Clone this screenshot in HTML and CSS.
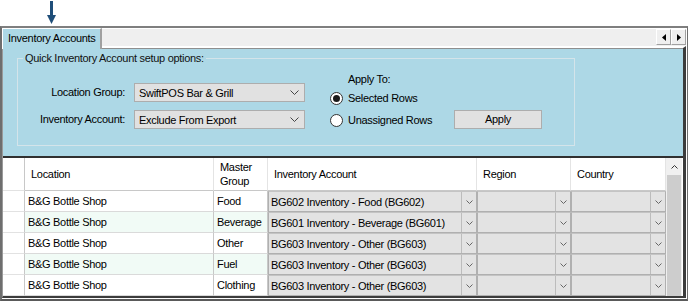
FILE: index.html
```html
<!DOCTYPE html>
<html>
<head>
<meta charset="utf-8">
<link rel="stylesheet" href="styles.css">
</head>
<body>
<div class="pointer">
  <svg width="11" height="26" viewBox="0 0 11 26"><rect x="4" y="1" width="3" height="16" fill="#1f4e79"/><polygon points="1,15 10,15 5.5,24" fill="#1f4e79"/></svg>
</div>
<div class="window">
  <div class="tabstrip">
    <div class="tab">Inventory Accounts</div>
    <div class="scrollbtns">
      <span class="sbtn"><svg width="4" height="7" viewBox="0 0 4 7"><polygon points="4,0 4,7 0,3.5" fill="#000"/></svg></span>
      <span class="sbtn"><svg width="4" height="7" viewBox="0 0 4 7"><polygon points="0,0 0,7 4,3.5" fill="#000"/></svg></span>
    </div>
  </div>
  <div class="page">
    <div class="group">
      <span class="legend">Quick Inventory Account setup options:</span>
      <div class="fields">
        <label class="flabel">Location Group:</label>
        <div class="combo"><span>SwiftPOS Bar &amp; Grill</span><svg class="chev" width="9" height="5" viewBox="0 0 9 5"><polyline points="0.5,0.5 4.5,4.5 8.5,0.5" fill="none" stroke="#444" stroke-width="1"/></svg></div>
        <label class="flabel">Inventory Account:</label>
        <div class="combo"><span>Exclude From Export</span><svg class="chev" width="9" height="5" viewBox="0 0 9 5"><polyline points="0.5,0.5 4.5,4.5 8.5,0.5" fill="none" stroke="#444" stroke-width="1"/></svg></div>
      </div>
      <div class="applyto">
        <div class="apply-title">Apply To:</div>
        <div class="radio-row"><span class="radio checked"></span>Selected Rows</div>
        <div class="radio-row"><span class="radio"></span>Unassigned Rows</div>
      </div>
      <div class="apply-btn">Apply</div>
    </div>
    <div class="gridwrap">
      <div class="grid">
        <div class="hdr rh"></div>
        <div class="hdr">Location</div>
        <div class="hdr">Master<br>Group</div>
        <div class="hdr">Inventory Account</div>
        <div class="hdr">Region</div>
        <div class="hdr">Country</div>

        <div class="rh"></div>
        <div class="cell">B&amp;G Bottle Shop</div>
        <div class="cell">Food</div>
        <div class="dd"><span>BG602 Inventory - Food (BG602)</span><i class="ddbtn"><svg width="7" height="4" viewBox="0 0 7 4"><polyline points="0.5,0.5 3.5,3.5 6.5,0.5" fill="none" stroke="#666"/></svg></i></div>
        <div class="dd"><span></span><i class="ddbtn"><svg width="7" height="4" viewBox="0 0 7 4"><polyline points="0.5,0.5 3.5,3.5 6.5,0.5" fill="none" stroke="#666"/></svg></i></div>
        <div class="dd"><span></span><i class="ddbtn"><svg width="7" height="4" viewBox="0 0 7 4"><polyline points="0.5,0.5 3.5,3.5 6.5,0.5" fill="none" stroke="#666"/></svg></i></div>

        <div class="rh alt"></div>
        <div class="cell alt">B&amp;G Bottle Shop</div>
        <div class="cell alt">Beverage</div>
        <div class="dd"><span>BG601 Inventory - Beverage (BG601)</span><i class="ddbtn"><svg width="7" height="4" viewBox="0 0 7 4"><polyline points="0.5,0.5 3.5,3.5 6.5,0.5" fill="none" stroke="#666"/></svg></i></div>
        <div class="dd"><span></span><i class="ddbtn"><svg width="7" height="4" viewBox="0 0 7 4"><polyline points="0.5,0.5 3.5,3.5 6.5,0.5" fill="none" stroke="#666"/></svg></i></div>
        <div class="dd"><span></span><i class="ddbtn"><svg width="7" height="4" viewBox="0 0 7 4"><polyline points="0.5,0.5 3.5,3.5 6.5,0.5" fill="none" stroke="#666"/></svg></i></div>

        <div class="rh"></div>
        <div class="cell">B&amp;G Bottle Shop</div>
        <div class="cell">Other</div>
        <div class="dd"><span>BG603 Inventory - Other (BG603)</span><i class="ddbtn"><svg width="7" height="4" viewBox="0 0 7 4"><polyline points="0.5,0.5 3.5,3.5 6.5,0.5" fill="none" stroke="#666"/></svg></i></div>
        <div class="dd"><span></span><i class="ddbtn"><svg width="7" height="4" viewBox="0 0 7 4"><polyline points="0.5,0.5 3.5,3.5 6.5,0.5" fill="none" stroke="#666"/></svg></i></div>
        <div class="dd"><span></span><i class="ddbtn"><svg width="7" height="4" viewBox="0 0 7 4"><polyline points="0.5,0.5 3.5,3.5 6.5,0.5" fill="none" stroke="#666"/></svg></i></div>

        <div class="rh alt"></div>
        <div class="cell alt">B&amp;G Bottle Shop</div>
        <div class="cell alt">Fuel</div>
        <div class="dd"><span>BG603 Inventory - Other (BG603)</span><i class="ddbtn"><svg width="7" height="4" viewBox="0 0 7 4"><polyline points="0.5,0.5 3.5,3.5 6.5,0.5" fill="none" stroke="#666"/></svg></i></div>
        <div class="dd"><span></span><i class="ddbtn"><svg width="7" height="4" viewBox="0 0 7 4"><polyline points="0.5,0.5 3.5,3.5 6.5,0.5" fill="none" stroke="#666"/></svg></i></div>
        <div class="dd"><span></span><i class="ddbtn"><svg width="7" height="4" viewBox="0 0 7 4"><polyline points="0.5,0.5 3.5,3.5 6.5,0.5" fill="none" stroke="#666"/></svg></i></div>

        <div class="rh"></div>
        <div class="cell">B&amp;G Bottle Shop</div>
        <div class="cell">Clothing</div>
        <div class="dd"><span>BG603 Inventory - Other (BG603)</span><i class="ddbtn"><svg width="7" height="4" viewBox="0 0 7 4"><polyline points="0.5,0.5 3.5,3.5 6.5,0.5" fill="none" stroke="#666"/></svg></i></div>
        <div class="dd"><span></span><i class="ddbtn"><svg width="7" height="4" viewBox="0 0 7 4"><polyline points="0.5,0.5 3.5,3.5 6.5,0.5" fill="none" stroke="#666"/></svg></i></div>
        <div class="dd"><span></span><i class="ddbtn"><svg width="7" height="4" viewBox="0 0 7 4"><polyline points="0.5,0.5 3.5,3.5 6.5,0.5" fill="none" stroke="#666"/></svg></i></div>
      </div>
      <div class="vscroll">
        <div class="vs-up"><svg width="7" height="4" viewBox="0 0 7 4"><polyline points="0.5,3.5 3.5,0.5 6.5,3.5" fill="none" stroke="#333"/></svg></div>
        <div class="vs-thumb"></div>
      </div>
    </div>
  </div>
</div>
</body>
</html>
```

FILE: styles.css
```css
* { box-sizing: border-box; }
html, body { margin: 0; padding: 0; }
body {
  width: 688px;
  height: 301px;
  overflow: hidden;
  background: #fff;
  font-family: "Liberation Sans", Arial, sans-serif;
  font-size: 11px;
  letter-spacing: -0.3px;
  color: #000;
}
.pointer {
  height: 26px;
  padding-left: 46px;
}
.pointer svg { display: block; }

.window {
  height: 275px;
  border-top: 2px solid #7f7f7f;
  border-left: 2px solid #6e6e6e;
  border-right: 1px solid #6e6e6e;
  border-bottom: 2px solid #5a5a5a;
  padding-right: 1px;
  padding-bottom: 1px;
  background: #fff;
  display: flex;
  flex-direction: column;
}
.tabstrip {
  height: 18px;
  flex: none;
  background: #efefef;
  border-top: 1px solid #fff;
  display: flex;
  justify-content: space-between;
  align-items: flex-start;
}
.tab {
  position: relative;
  z-index: 1;
  width: 100px;
  height: 21px;
  margin-top: -1px;
  background: #add8e6;
  border-left: 1px solid #fff;
  border-top: 1px solid #fff;
  border-right: 2px solid #a0a0a0;
  padding: 3px 0 0 5px;
  line-height: 13px;
}
.scrollbtns { display: flex; margin-top: 0; }
.sbtn {
  width: 15px;
  height: 16px;
  background: #efefef;
  border: 1px solid #fff;
  border-right-color: #a0a0a0;
  border-bottom-color: #a0a0a0;
  display: flex;
  align-items: center;
  justify-content: center;
}
.page {
  flex: none;
  height: 252px;
  background: #add8e6;
  border-top: 2px solid #fff;
  border-left: 1px solid #9a9a9a;
  border-right: 3px solid #3c3c3c;
  border-bottom: 2px solid #3c3c3c;
  box-shadow: inset 0 1px 0 #8f8f8f;
  padding-top: 10px;
  display: flex;
  flex-direction: column;
}
.group {
  position: relative;
  flex: none;
  margin-left: 14px;
  width: 558px;
  height: 88px;
  border: 1px solid #d4e4ea;
  padding: 13px 0 0 0;
  display: flex;
  align-items: flex-start;
}
.legend {
  position: absolute;
  left: 5px;
  top: -7px;
  background: #add8e6;
  padding: 0 2px;
  line-height: 13px;
  color: #111;
}
.fields {
  margin-top: 11px;
  display: grid;
  grid-template-columns: 107px 171px;
  column-gap: 9px;
  row-gap: 8px;
  align-items: center;
}
.flabel { text-align: right; line-height: 19px; }
.combo {
  height: 19px;
  background: #e1e1e1;
  border: 1px solid #adadad;
  display: flex;
  align-items: center;
  justify-content: space-between;
  padding: 0 5px 0 4px;
}
.applyto {
  margin-left: 25px;
  width: 124px;
  flex: none;
  display: flex;
  flex-direction: column;
}
.apply-title { line-height: 14px; padding-left: 18px; }
.radio-row {
  height: 18px;
  display: flex;
  align-items: center;
  gap: 5px;
  margin-top: 3px;
  white-space: nowrap;
}
.radio-row + .radio-row { margin-top: 4px; }
.radio {
  width: 13px;
  height: 13px;
  flex: none;
  border-radius: 50%;
  border: 1px solid #333;
  background: #fff;
  display: flex;
  align-items: center;
  justify-content: center;
}
.radio.checked::after {
  content: "";
  width: 7px;
  height: 7px;
  border-radius: 50%;
  background: #1a1a1a;
}
.apply-btn {
  margin-top: 38px;
  width: 88px;
  height: 19px;
  background: #e1e1e1;
  border: 1px solid #adadad;
  text-align: center;
  line-height: 17px;
}
.gridwrap {
  margin-top: 10px;
  height: 140px;
  flex: none;
  background: #fff;
  border-top: 2px solid #303030;
  display: flex;
}
.grid {
  display: grid;
  grid-template-columns: 22px 189px 54px 209px 94px 95px;
  grid-template-rows: 33px repeat(5, 21px);
  align-content: start;
}
.hdr {
  background: #fff;
  border-right: 1px solid #e4e4e4;
  border-bottom: 1px solid #c8c8c8;
  display: flex;
  align-items: center;
  padding-left: 6px;
  line-height: 14px;
}
.hdr.rh { padding: 0; }
.rh {
  border-right: 1px solid #c8c8c8;
  border-bottom: 1px solid #e2e2e2;
  background: #fff;
}
.cell {
  background: #fff;
  border-right: 1px solid #c8c8c8;
  border-bottom: 1px solid #dadada;
  padding-left: 3px;
  display: flex;
  align-items: center;
}
.alt { background: #f1fbf6; }
.rh.alt { background: #fff; }
.dd {
  background: #e3e3e3;
  border: 1px solid #b0b0b0;
  border-top-color: #c4c4c4;
  display: flex;
  align-items: stretch;
}
.dd span {
  flex: 1;
  padding-left: 2px;
  display: flex;
  align-items: center;
  white-space: nowrap;
  overflow: hidden;
}
.ddbtn {
  width: 15px;
  border-left: 1px solid #bcbcbc;
  display: flex;
  align-items: center;
  justify-content: center;
}
.vscroll {
  width: 16px;
  margin-right: 1px;
  display: flex;
  flex-direction: column;
  background: #f0f0f0;
}
.vs-up {
  height: 17px;
  display: flex;
  align-items: center;
  justify-content: center;
}
.vs-thumb {
  flex: 1;
  margin: 0 1px 0 1px;
  background: #cdcdcd;
}
```
